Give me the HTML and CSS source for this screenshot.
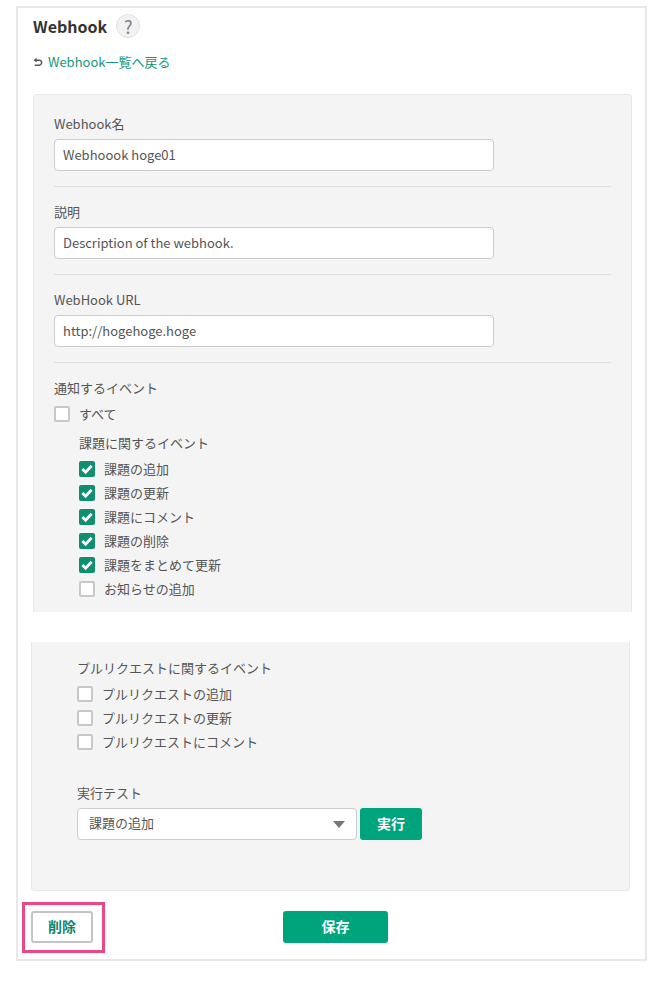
FILE: index.html
```html
<!DOCTYPE html>
<html lang="ja">
<head>
    <meta charset="UTF-8">
    <title>Webhook</title>
    <link rel="stylesheet" href="styles.css">
</head>
<body>
    <div class="frame">
        <!-- Title -->
        <div class="title-row">
            <h1 class="title">Webhook</h1>
            <span class="help">?</span>
        </div>
        <div class="back-row">
            <svg class="back-icon" width="10" height="10" viewBox="0 0 10 10"><path d="M3.6 0.8 0.6 3.2l3 2.4V4h2.6C7.2 4 7.9 4.7 7.9 5.6S7.2 7.4 6.2 7.4H1.8v1.5h4.4c1.8 0 3.2-1.5 3.2-3.3S8 2.5 6.2 2.5H3.6z" fill="#555"/></svg>
            <a class="back-link" href="#">Webhook一覧へ戻る</a>
        </div>

        <!-- Upper half of the form -->
        <div class="panel panel-top">
            <div class="field">
                <label class="label">Webhook名</label>
                <input class="text-input" type="text" value="Webhoook hoge01">
            </div>
            <div class="field">
                <label class="label">説明</label>
                <input class="text-input" type="text" value="Description of the webhook.">
            </div>
            <div class="field">
                <label class="label">WebHook URL</label>
                <input class="text-input" type="text" value="http://hogehoge.hoge">
            </div>
            <div class="label">通知するイベント</div>
            <div class="check-row check-all"><span class="box"></span><span>すべて</span></div>
            <div class="group">
                <div class="label group-title">課題に関するイベント</div>
                <div class="check-row"><span class="box on"><svg width="16" height="16" viewBox="0 0 16 16"><path d="M3.4 8 6.6 11.2 12.6 4.8" fill="none" stroke="#fff" stroke-width="2.8"/></svg></span><span>課題の追加</span></div>
                <div class="check-row"><span class="box on"><svg width="16" height="16" viewBox="0 0 16 16"><path d="M3.4 8 6.6 11.2 12.6 4.8" fill="none" stroke="#fff" stroke-width="2.8"/></svg></span><span>課題の更新</span></div>
                <div class="check-row"><span class="box on"><svg width="16" height="16" viewBox="0 0 16 16"><path d="M3.4 8 6.6 11.2 12.6 4.8" fill="none" stroke="#fff" stroke-width="2.8"/></svg></span><span>課題にコメント</span></div>
                <div class="check-row"><span class="box on"><svg width="16" height="16" viewBox="0 0 16 16"><path d="M3.4 8 6.6 11.2 12.6 4.8" fill="none" stroke="#fff" stroke-width="2.8"/></svg></span><span>課題の削除</span></div>
                <div class="check-row"><span class="box on"><svg width="16" height="16" viewBox="0 0 16 16"><path d="M3.4 8 6.6 11.2 12.6 4.8" fill="none" stroke="#fff" stroke-width="2.8"/></svg></span><span>課題をまとめて更新</span></div>
                <div class="check-row"><span class="box"></span><span>お知らせの追加</span></div>
            </div>
        </div>

        <!-- Lower half of the form -->
        <div class="panel panel-bottom">
            <div class="label group-title">プルリクエストに関するイベント</div>
            <div class="check-row"><span class="box"></span><span>プルリクエストの追加</span></div>
            <div class="check-row"><span class="box"></span><span>プルリクエストの更新</span></div>
            <div class="check-row"><span class="box"></span><span>プルリクエストにコメント</span></div>
            <div class="label test-label">実行テスト</div>
            <div class="test-row">
                <div class="select"><span>課題の追加</span><span class="caret"></span></div>
                <button class="btn btn-run">実行</button>
            </div>
        </div>

        <!-- Footer buttons -->
        <div class="footer">
            <span class="highlight"></span>
            <button class="btn-delete">削除</button>
            <button class="btn btn-save">保存</button>
        </div>
    </div>
</body>
</html>
```

FILE: styles.css
```css
/* Page */
body {
    margin: 0;
    padding: 6px 15px 20px 16px;
    background: #fff;
    color: #555;
    font-family: "Noto Sans CJK JP", "Noto Sans", sans-serif;
    font-size: 13px;
    line-height: 20px;
}

.frame {
    box-sizing: border-box;
    height: 955px;
    border: 2px solid #e8e8e8;
    padding: 0 15px;
}

/* Title */
.title-row {
    display: flex;
    align-items: center;
    height: 24px;
    margin-top: 6px;
}

.title {
    margin: 0;
    font-size: 16px;
    font-weight: 700;
    color: #333;
}

.help {
    box-sizing: border-box;
    display: flex;
    justify-content: center;
    align-items: center;
    width: 24px;
    height: 24px;
    margin-left: 9px;
    border: 1px solid #e2e2e2;
    border-radius: 50%;
    background: #f2f2f2;
    color: #808080;
    font-size: 18px;
}

.back-row {
    display: flex;
    align-items: center;
    height: 20px;
    margin-top: 14px;
}

.back-icon {
    margin-right: 5px;
}

.back-link {
    color: #14977a;
    text-decoration: none;
}

/* Form panels */
.panel {
    box-sizing: border-box;
    width: 599px;
    background: #f4f4f4;
    border: 1px solid #e8e8e8;
}

.panel-top {
    height: 518px;
    margin-top: 22px;
    padding: 19px 20px 0;
    border-bottom: none;
    border-radius: 4px 4px 0 0;
}

.panel-bottom {
    height: 249px;
    margin-top: 30px;
    margin-left: -2px;
    padding: 16px 45px 0;
    border-top: none;
    border-radius: 0 0 4px 4px;
}

.field {
    box-sizing: border-box;
    width: 557px;
    height: 73px;
    margin-bottom: 15px;
    border-bottom: 1px solid #dedede;
}

.field .label {
    display: block;
}

.label {
    height: 20px;
}

.text-input {
    box-sizing: border-box;
    display: block;
    width: 440px;
    height: 32px;
    margin-top: 5px;
    padding: 0 8px 2px;
    border: 1px solid #ccc;
    border-radius: 4px;
    background: #fff;
    color: #555;
    font: inherit;
}

/* Checkboxes */
.check-row {
    display: flex;
    align-items: center;
    height: 24px;
}

.check-all {
    margin-top: 4px;
}

.box {
    box-sizing: border-box;
    flex: none;
    width: 16px;
    height: 16px;
    margin-right: 9px;
    border: 2px solid #c8c8c8;
    border-radius: 2px;
    background: #fff;
}

.box.on {
    border: none;
    background: #0d8f70;
}

.box svg {
    display: block;
}

.group {
    margin-top: 7px;
    margin-left: 25px;
}

.group-title {
    margin-bottom: 4px;
}

/* Test row */
.test-label {
    margin-top: 29px;
}

.test-row {
    display: flex;
    gap: 3px;
    margin-top: 5px;
}

.select {
    box-sizing: border-box;
    display: flex;
    justify-content: space-between;
    align-items: center;
    width: 280px;
    height: 32px;
    padding: 0 11px 2px;
    border: 1px solid #ccc;
    border-radius: 4px;
    background: #fff;
}

.caret {
    width: 0;
    height: 0;
    margin-top: 2px;
    border-left: 6px solid transparent;
    border-right: 6px solid transparent;
    border-top: 7px solid #777;
}

/* Buttons */
.btn {
    height: 32px;
    padding: 0 0 2px;
    border: none;
    border-radius: 3px;
    background: #00a47c;
    color: #fff;
    font: inherit;
    font-size: 14px;
    font-weight: 700;
}

.btn-run {
    width: 62px;
}

.footer {
    position: relative;
    display: flex;
    margin-top: 20px;
    margin-left: -2px;
}

.btn-delete {
    box-sizing: border-box;
    width: 62px;
    height: 32px;
    padding: 0 0 2px;
    border: 2px solid #c4c4c4;
    border-radius: 3px;
    background: #fff;
    color: #14856b;
    font: inherit;
    font-size: 14px;
    font-weight: 700;
}

.btn-save {
    width: 105px;
    margin-left: 190px;
}

/* Pink annotation around the delete button */
.highlight {
    position: absolute;
    left: -9px;
    top: -9px;
    width: 83px;
    height: 51px;
    box-sizing: border-box;
    border: 3px solid #ee4787;
}
```
